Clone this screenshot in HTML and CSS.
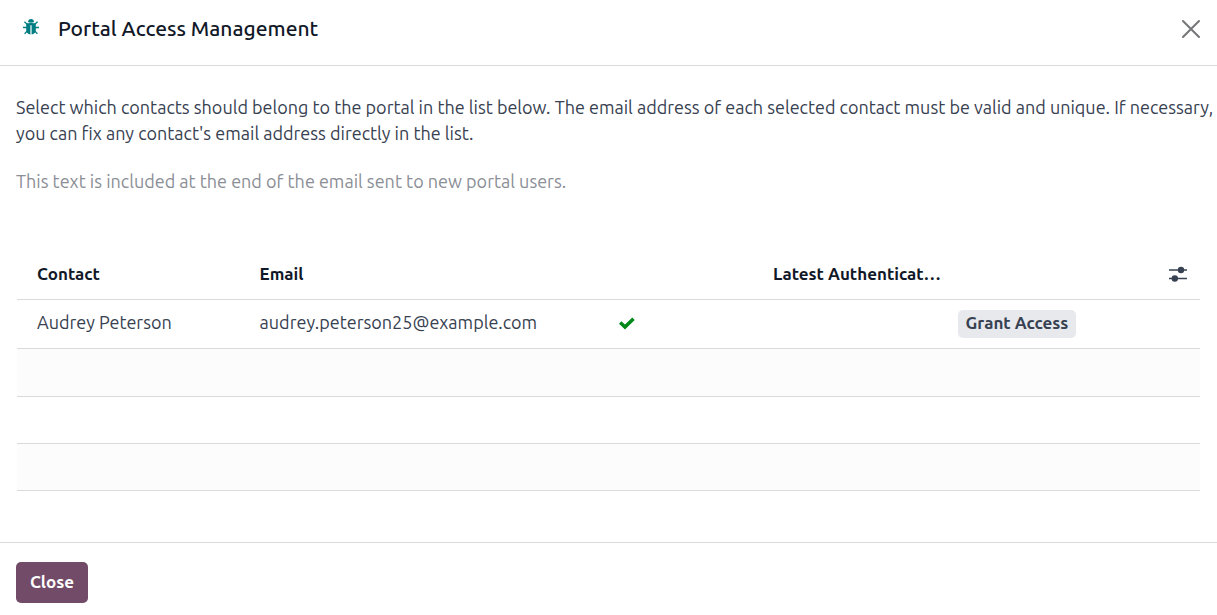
FILE: index.html
```html
<!DOCTYPE html>
<html lang="en">
<head>
<meta charset="utf-8">
<meta name="viewport" content="width=device-width, initial-scale=1">
<title>Portal Access Management</title>
<link rel="stylesheet" href="styles.css">
</head>
<body>
<div class="dialog" role="dialog" aria-labelledby="dialog-title">
  <header class="dialog-header">
    <button class="icon-button debug" type="button" aria-label="Debug">
      <svg width="16" height="16" viewBox="0 0 16 16" aria-hidden="true">
        <path d="M5 3.200C5 1 6.300 0 8 0s3 1 3 3.200z" fill="#017e84"/>
        <path d="M3.200 4.200h4.200v11.300C4.700 15.200 3.200 13.500 3.200 11zM8.600 4.200h4.200V11c0 2.500-1.500 4.200-4.200 4.500z" fill="#017e84"/>
        <path d="M7 4.200h2v1.300H7zM1.400 2.700 4.500 5.500M14.600 2.700l-3.100 2.800M0 8.500h4.500M16 8.500h-4.500M1.600 14.800l3-3.200M14.400 14.800l-3-3.200" fill="none" stroke="#017e84" stroke-width="1.300"/>
      </svg>
    </button>
    <h1 class="dialog-title" id="dialog-title">Portal Access Management</h1>
    <button class="icon-button dismiss" type="button" aria-label="Close dialog">
      <svg width="20" height="20" viewBox="0 0 20 20" aria-hidden="true">
        <path d="m2 2 16 16M18 2 2 18" fill="none" stroke="#76777a" stroke-width="2.100" stroke-linecap="round"/>
      </svg>
    </button>
  </header>
  <main class="dialog-body">
    <p class="intro">Select which contacts should belong to the portal in the list below. The email address of each selected contact must be valid and unique. If necessary, you can fix any contact's email address directly in the list.</p>
    <p class="note">This text is included at the end of the email sent to new portal users.</p>
    <div class="list">
      <table class="contacts">
        <colgroup>
          <col class="col-contact"><col class="col-email"><col class="col-status"><col class="col-latest"><col class="col-action"><col class="col-options">
        </colgroup>
        <thead>
          <tr>
            <th scope="col">Contact</th>
            <th scope="col">Email</th>
            <th></th>
            <th scope="col">Latest Authenticat…</th>
            <th></th>
            <th>
              <button class="icon-button options" type="button" aria-label="Optional columns">
                <svg width="18" height="16" viewBox="0 0 18 16" aria-hidden="true">
                  <path d="M0 4h18M0 12.500h18" stroke="#374151" stroke-width="1.500"/>
                  <circle cx="12" cy="4" r="3.200" fill="#374151"/>
                  <circle cx="5.800" cy="12.500" r="3.200" fill="#374151"/>
                </svg>
              </button>
            </th>
          </tr>
        </thead>
        <tbody>
          <tr class="record">
            <td class="text">Audrey Peterson</td>
            <td class="text">audrey.peterson25@example.com</td>
            <td>
              <svg class="check" width="16" height="13" viewBox="0 0 16 13" role="img" aria-label="Valid email">
                <path d="M0 6.700 2.300 4.300 6 7.500 13.300.500 15.700 2.900 6 12.600z" fill="#008818"/>
              </svg>
            </td>
            <td></td>
            <td><button class="grant" type="button">Grant Access</button></td>
            <td></td>
          </tr>
          <tr class="striped"><td colspan="6"></td></tr>
          <tr><td colspan="6"></td></tr>
          <tr class="striped"><td colspan="6"></td></tr>
        </tbody>
      </table>
    </div>
  </main>
  <footer class="dialog-footer">
    <button class="primary" type="button">Close</button>
  </footer>
</div>
</body>
</html>
```
FILE: styles.css
```css
* {
  box-sizing: border-box;
}

body {
  margin: 0;
  background: #fff;
  color: #374151;
  font-family: Ubuntu, "Noto Sans", "Open Sans", sans-serif;
  font-size: 18px;
  line-height: 26px;
}

button {
  border: 0;
  font: inherit;
  cursor: pointer;
}

.dialog-header {
  display: flex;
  align-items: flex-start;
  padding: 12px 16px 21px 23px;
  border-bottom: 1px solid #d8dadd;
}

.dialog-title {
  flex: 1;
  margin: 0 0 0 19px;
  color: #111827;
  font-size: 21px;
  font-weight: 500;
  line-height: 32px;
}

.icon-button {
  display: block;
  padding: 0;
  background: none;
}

.icon-button svg {
  display: block;
}

.debug,
.dismiss {
  padding-top: 7px;
}

.dialog-body {
  padding: 28px 0 51px 16px;
}

.intro {
  margin: 0 0 22px;
}

.note {
  margin: 0 0 52px;
  color: #8b8e96;
}

.list {
  padding: 0 17px 0 1px;
}

.contacts {
  width: 100%;
  table-layout: fixed;
  border-collapse: collapse;
}

.col-contact {
  width: 20%;
}

.col-email {
  width: 30.4%;
}

.col-status {
  width: 13%;
}

.col-latest {
  width: 15.6%;
}

.col-options {
  width: 37px;
}

.contacts th,
.contacts td {
  height: 47px;
  padding: 0 6px;
  border-bottom: 1px solid #d8dadd;
  text-align: left;
  white-space: nowrap;
}

.contacts th {
  height: 53px;
  padding-top: 3px;
  color: #111827;
  font-size: 17px;
  font-weight: 600;
}

.contacts .record td {
  height: 49px;
}

.contacts .record + tr td {
  height: 48px;
}

.contacts .record .text {
  padding-bottom: 4px;
}

.contacts th:first-child,
.contacts td:first-child {
  padding-left: 20px;
}

.check,
.options {
  display: block;
}

.striped {
  background: #fcfcfc;
}

.grant {
  display: block;
  padding: 0 8px 2px;
  border-radius: 5px;
  background: #e7e9ed;
  color: #374151;
  font-size: 17px;
  font-weight: 600;
}

.dialog-footer {
  padding: 19px 16px 12px;
  border-top: 1px solid #d8dadd;
}

.primary {
  display: block;
  padding: 7px 14px 8px;
  border-radius: 5px;
  background: #714b67;
  color: #fff;
  font-size: 17px;
  font-weight: 600;
}
```
